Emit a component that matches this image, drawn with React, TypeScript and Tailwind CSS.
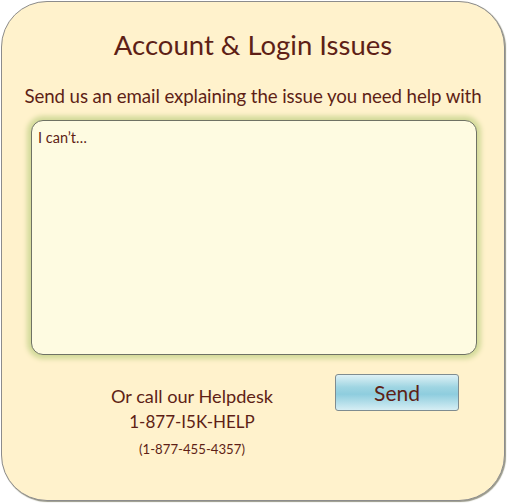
export default function App() {
  const font = { fontFamily: "Lato, 'Open Sans', sans-serif" };
  return (
    <div className="w-[507px] h-[503px] p-[1px] bg-white" style={font}>
      <div className="w-[504px] h-[500px] rounded-[46px] border-[1.5px] border-[#8c8c8c] bg-[#fff2cc] shadow-[1px_1px_1px_#9a9a8a] flex flex-col items-center text-[#5e1f16]">
        <div className="mt-[27px] text-[27.5px] leading-[32px]">Account &amp; Login Issues</div>
        <div className="mt-[23px] text-[18.7px] leading-[24px] tracking-[-0.1px]">Send us an email explaining the issue you need help with</div>
        <div className="mt-[12px] w-[446px] h-[235px] rounded-[12px] border border-[#6f7264] bg-[#fefbe1] shadow-[0_0_5px_4px_#d3da9a] px-[6px] py-[8px] text-[14.5px] leading-[18px] self-start ml-[29px]">
          I can’t…
        </div>
        <div className="flex self-start items-start mt-[19px]">
          <div className="ml-[65px] w-[250px] mt-[10px] flex flex-col items-center">
            <div className="text-[18.2px] leading-[25px]">Or call our Helpdesk</div>
            <div className="text-[17px] leading-[25px]">1-877-I5K-HELP</div>
            <div className="text-[13.2px] leading-[25px] mt-[3px]">(1-877-455-4357)</div>
          </div>
          <div className="ml-[18px] w-[124px] h-[37px] rounded-[3px] border border-[#7f8c90] bg-[linear-gradient(to_bottom,#def1f6_0%,#9fd5e2_35%,#8ecdde_55%,#d6eef4_100%)] flex items-center justify-center text-[21px] leading-[24px]">
            Send
          </div>
        </div>
      </div>
    </div>
  );
}
